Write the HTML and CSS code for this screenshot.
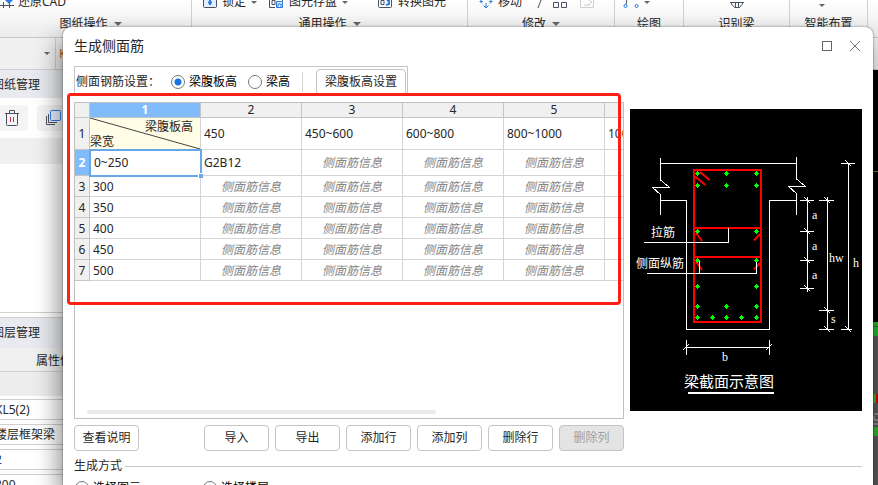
FILE: index.html
```html
<!DOCTYPE html>
<html lang="zh-CN">
<head>
    <meta charset="UTF-8">
    <meta name="viewport" content="width=device-width, initial-scale=1.0">
    <title>生成侧面筋</title>
    <link rel="stylesheet" href="styles.css">
</head>
<body>

<div class="ribbon">
    <div class="ribbon-group drawing">
        <div class="ribbon-tools first">
            <svg class="icon" width="16" height="16" viewBox="0 0 16 16"><path d="M0 4.500h13M3.500 8v6M9.500 8v6M0 11.500h14" fill="none" stroke="#4a5064"/><path d="M5 6l4 4 4-4-4-4z" fill="#2a7be4"/></svg>
            <span>还原CAD</span>
        </div>
        <div class="ribbon-label">图纸操作<i class="caret"></i></div>
    </div>
    <div class="ribbon-group">
        <div class="ribbon-tools">
            <svg class="icon" width="14" height="16" viewBox="0 0 14 16"><rect x=".5" y="2.500" width="13" height="11" rx="1" fill="#e3effd" stroke="#4a5064"/><path d="M7 6v5M5 8.500h4" stroke="#2a7be4" stroke-width="2"/></svg>
            <span>锁定</span><i class="caret small"></i>
            <svg class="icon far" width="16" height="16" viewBox="0 0 16 16"><path d="M7 13.500H1.500v-11h13V7M4 6.500h3v4H4z" fill="none" stroke="#4a5064"/><path d="M8.500 7.500h6v6h-6zM10 13v-3h3v3" fill="#e3effd" stroke="#2a7be4"/></svg>
            <span>图元存盘</span><i class="caret small"></i>
            <svg class="icon farther" width="16" height="16" viewBox="0 0 16 16"><rect x="1.500" y="2.500" width="13" height="11" rx="1" fill="none" stroke="#4a5064"/><path d="M4 6.500h3v4H4z" fill="none" stroke="#4a5064"/><path d="M9 11l3-1V5M10 7l2-2" fill="none" stroke="#2a7be4" stroke-width="2"/></svg>
            <span>转换图元</span>
        </div>
        <div class="ribbon-label">通用操作<i class="caret"></i></div>
    </div>
    <div class="ribbon-group">
        <div class="ribbon-tools">
            <svg class="icon" width="14" height="16" viewBox="0 0 14 16"><path d="M7 1v4M7 9v5M4.500 11.500L7 14l2.500-2.500M1 7.500h3M10 7.500h3M3 5.500l-2 2 2 2M11 5.500l2 2-2 2" fill="none" stroke="#2a7be4"/></svg>
            <span>移动</span>
            <svg class="icon far" width="14" height="16" viewBox="0 0 14 16"><path d="M5 14l5-13" stroke="#4a5064"/></svg>
            <svg class="icon" width="16" height="16" viewBox="0 0 16 16"><path d="M1.500 1.500h5v4h-5zM9.500 1.500h5v4h-5zM1.500 8.500h5v5h-5zM9.500 8.500h5v5h-5z" fill="none" stroke="#4a5064"/></svg>
            <svg class="icon far" width="16" height="16" viewBox="0 0 16 16"><path d="M1.500 2.500h13v11h-13zM5 11h6M9 5l4 3-4 3" fill="none" stroke="#cfcfcf"/></svg>
        </div>
        <div class="ribbon-label">修改<i class="caret"></i></div>
    </div>
    <div class="ribbon-group">
        <div class="ribbon-tools tight">
            <svg class="icon" width="16" height="16" viewBox="0 0 16 16"><path d="M3 11q0-6 3-9" fill="none" stroke="#4a5064"/><circle cx="2.500" cy="12" r="1.500" fill="none" stroke="#2a7be4"/><circle cx="13.500" cy="12" r="1.500" fill="none" stroke="#2a7be4"/></svg>
            <i class="caret small"></i>
        </div>
        <div class="ribbon-label">绘图</div>
    </div>
    <div class="ribbon-group">
        <div class="ribbon-tools middle">
            <svg class="icon" width="16" height="16" viewBox="0 0 16 16"><path d="M1 8.500h14M2.500 8v2l3 3.500h5l3-3.500V8M6.500 9v4M9.500 9v4" fill="none" stroke="#4a5064"/></svg>
        </div>
        <div class="ribbon-label">识别梁</div>
    </div>
    <div class="ribbon-group">
        <div class="ribbon-tools tight low"><i class="caret small"></i></div>
        <div class="ribbon-label">智能布置</div>
    </div>
    <div class="ribbon-group"></div>
</div>

<div class="combo-bar">
    <button class="combo" aria-label="楼层"><i class="caret small"></i></button>
    <span class="combo-next">K</span>
</div>

<div class="workspace">
    <div class="sidebar">
        <div class="side-title">图纸管理</div>
        <div class="side-tools">
            <button class="side-button" aria-label="删除">
                <svg width="16" height="18" viewBox="0 0 16 18"><path d="M1 4.500h14M5.500 4V1.500h5V4M2.500 5v10.500q0 1 1 1h9q1 0 1-1V5" fill="none" stroke="#4a5064"/><path d="M6.500 8v5M9.500 8v5" stroke="#c9303c"/></svg>
            </button>
            <button class="side-button" aria-label="复制">
                <svg width="16" height="16" viewBox="0 0 16 16"><path d="M1.500 6v8.500H10M3.500 4v8.500H12" fill="none" stroke="#4a5064"/><rect x="5.500" y=".5" width="10" height="10" rx="1" fill="#e9f2fd" stroke="#2a7be4"/></svg>
            </button>
        </div>
        <div class="side-head"></div>
        <div class="side-list"></div>
        <div class="side-title layers">图层管理</div>
        <div class="side-tab">属性值</div>
        <div class="side-gap"></div>
        <div class="side-row">KL5(2)</div>
        <div class="side-row">楼层框架梁</div>
        <div class="side-row blue">2</div>
        <div class="side-row">200</div>
    </div>
    <div class="canvas">
        <svg width="6" height="415" viewBox="0 0 6 415">
            <rect width="6" height="252" fill="#000"/>
            <rect y="101" width="6" height="1" fill="#77720a"/>
            <rect y="252" width="6" height="163" fill="#555758"/>
            <rect y="252" width="6" height="14" fill="#22b322"/>
            <rect y="256" width="6" height="1" fill="#117a11"/>
            <rect y="324" width="4" height="9" fill="#22b322"/>
            <rect x="4" y="324" width="2" height="9" fill="#c40000"/>
            <path d="M2 344h4M2 346v4h4M1 354h5" stroke="#b0b0b0" fill="none"/>
            <rect y="357" width="6" height="9" fill="#22b322"/>
        </svg>
    </div>
</div>

<div class="dialog" role="dialog" aria-labelledby="dialog-title">
    <div class="dialog-header">
        <h1 id="dialog-title">生成侧面筋</h1>
        <button class="window-button" aria-label="最大化">
            <svg width="12" height="12" viewBox="0 0 12 12"><rect x="1.500" y="1.500" width="9" height="9" fill="none" stroke="#666"/></svg>
        </button>
        <button class="window-button" aria-label="关闭">
            <svg width="12" height="12" viewBox="0 0 12 12"><path d="M1 1l10 10M11 1L1 11" stroke="#777"/></svg>
        </button>
    </div>

    <div class="dialog-body">
        <div class="left">
            <div class="settings">
                <span>侧面钢筋设置：</span>
                <label><input type="radio" name="height" checked>梁腹板高</label>
                <label><input type="radio" name="height">梁高</label>
                <span class="divider"></span>
                <button class="btn">梁腹板高设置</button>
            </div>

            <div class="grid-wrap">
                <div class="grid">
                    <table>
                        <colgroup>
                            <col class="col-index"><col class="col-width"><col><col><col><col><col>
                        </colgroup>
                        <thead>
                            <tr><th></th><th class="active">1</th><th>2</th><th>3</th><th>4</th><th>5</th><th>6</th></tr>
                        </thead>
                        <tbody>
                            <tr class="row-heights">
                                <th>1</th>
                                <td class="corner">
                                    <svg class="slash" viewBox="0 0 110 31" preserveAspectRatio="none"><path d="M0 0l110 31" stroke="#444"/></svg>
                                    <div class="corner-top">梁腹板高</div>
                                    <div>梁宽</div>
                                </td>
                                <td>450</td><td>450~600</td><td>600~800</td><td>800~1000</td><td>1000~1200</td>
                            </tr>
                            <tr class="row-current">
                                <th class="active">2</th><td class="selected">0~250</td><td>G2B12</td><td class="hint">侧面筋信息</td><td class="hint">侧面筋信息</td><td class="hint">侧面筋信息</td><td></td>
                            </tr>
                            <tr><th>3</th><td>300</td><td class="hint">侧面筋信息</td><td class="hint">侧面筋信息</td><td class="hint">侧面筋信息</td><td class="hint">侧面筋信息</td><td></td></tr>
                            <tr><th>4</th><td>350</td><td class="hint">侧面筋信息</td><td class="hint">侧面筋信息</td><td class="hint">侧面筋信息</td><td class="hint">侧面筋信息</td><td></td></tr>
                            <tr><th>5</th><td>400</td><td class="hint">侧面筋信息</td><td class="hint">侧面筋信息</td><td class="hint">侧面筋信息</td><td class="hint">侧面筋信息</td><td></td></tr>
                            <tr><th>6</th><td>450</td><td class="hint">侧面筋信息</td><td class="hint">侧面筋信息</td><td class="hint">侧面筋信息</td><td class="hint">侧面筋信息</td><td></td></tr>
                            <tr><th>7</th><td>500</td><td class="hint">侧面筋信息</td><td class="hint">侧面筋信息</td><td class="hint">侧面筋信息</td><td class="hint">侧面筋信息</td><td></td></tr>
                        </tbody>
                    </table>
                    <div class="scrollbar"></div>
                </div>
                <div class="mark"></div>
            </div>

            <div class="actions">
                <button class="btn help">查看说明</button>
                <button class="btn">导入</button>
                <button class="btn">导出</button>
                <button class="btn">添加行</button>
                <button class="btn">添加列</button>
                <button class="btn">删除行</button>
                <button class="btn" disabled>删除列</button>
            </div>
        </div>

        <svg class="diagram" width="232" height="302" viewBox="0 0 232 302">
            <defs><path id="dot" d="M0-2h1v1h1v1h1v1h-1v1h-1v1h-1v-1h-1v-1h-1v-1h1v-1h1z" fill="#00ff00"/></defs>
            <rect width="232" height="302" fill="#000"/>
            <!-- slab and beam outline -->
            <g fill="none" stroke="#fff" shape-rendering="crispEdges">
                <path d="M30.500 49v22l9 7.500h-17l8 7V106"/>
                <path d="M166.500 48v22l9 7.500h-17l8 7V106"/>
                <path d="M30 54.500h137M30 91.500h26.500v129h83v-129H167"/>
            </g>
            <!-- stirrup and ties -->
            <g fill="none" stroke="#f00" stroke-width="2">
                <path d="M64 61h67v152H64zM64 119h67M64 148h67"/>
                <path d="M70 63l9.500 8M65 67.500l10.500 8.500M66 124l6 8M130 125l-6 6.500M66 153l6 8M130 154l-6 6.500"/>
            </g>
            <use href="#dot" x="67" y="64"/><use href="#dot" x="96" y="64"/><use href="#dot" x="126" y="64"/>
            <use href="#dot" x="67" y="76"/><use href="#dot" x="96" y="76"/><use href="#dot" x="126" y="76"/>
            <use href="#dot" x="67" y="122"/><use href="#dot" x="126" y="122"/>
            <use href="#dot" x="67" y="151"/><use href="#dot" x="126" y="151"/>
            <use href="#dot" x="67" y="177"/><use href="#dot" x="126" y="177"/>
            <use href="#dot" x="67" y="197"/><use href="#dot" x="96" y="197"/><use href="#dot" x="126" y="197"/>
            <use href="#dot" x="67" y="208"/><use href="#dot" x="82" y="208"/><use href="#dot" x="96" y="208"/><use href="#dot" x="111" y="208"/><use href="#dot" x="126" y="208"/>
            <!-- leaders and dimensions -->
            <g fill="none" stroke="#fff" shape-rendering="crispEdges">
                <path d="M14 133.500h84.500V119M17 164.500h109.500V153M69.500 164.500V152"/>
                <path d="M177.500 88v95M170 91.500h14M170 122.500h14M170 151.500h14M170 179.500h14"/>
                <path d="M197.500 88v133M189 91.500h15M189 201.500h15M189 220.500h15"/>
                <path d="M218.500 54v167M211 54.500h14M211 220.500h11"/>
                <path d="M56.500 231v15M139.500 231v15M56 238.500h84"/>
                <path d="M174 88l6 6M174 119l6 6M174 148l6 6M174 176l6 6M194 88l6 6M194 198l6 6M194 217l6 6M215 51l6 6M215 217l6 6M53 241l6-6M136 241l6-6"/>
            </g>
            <path d="M58 284h86" stroke="#fff" stroke-width="2"/>
            <g class="cn">
                <text x="21" y="128">拉筋</text>
                <text x="6" y="159">侧面纵筋</text>
                <text class="caption" x="54" y="278">梁截面示意图</text>
            </g>
            <g class="dims">
                <text x="182" y="110">a</text>
                <text x="182" y="141">a</text>
                <text x="182" y="170">a</text>
                <text x="199" y="153">hw</text>
                <text x="223" y="158">h</text>
                <text x="201" y="214">s</text>
                <text x="92" y="252">b</text>
            </g>
        </svg>
    </div>

    <fieldset class="mode">
        <legend>生成方式</legend>
        <label><input type="radio" name="mode">选择图元</label>
        <label><input type="radio" name="mode">选择楼层</label>
    </fieldset>
</div>

</body>
</html>
```

FILE: styles.css
```css
* {
    box-sizing: border-box;
}
body {
    margin: 0;
    height: 100vh;
    position: relative;
    overflow: hidden;
    display: flex;
    flex-direction: column;
    font-family: "Noto Sans", "Noto Sans CJK SC", sans-serif;
    font-size: 12px;
    line-height: 16px;
    color: #262626;
    background: #fff;
}
button {
    font: inherit;
    color: inherit;
    padding: 0;
    border: none;
    background: none;
}
svg {
    display: block;
    flex: none;
}

/* ribbon */
.ribbon {
    display: grid;
    grid-template-columns: 192fr 276fr 147fr 69fr 106fr 78fr 10fr;
    height: 38px;
    flex: none;
    border-bottom: 1px solid #c9c9cd;
    background: linear-gradient(#fff, #ececec);
}
.ribbon-group {
    display: flex;
    flex-direction: column;
    justify-content: flex-end;
    gap: 6px;
    padding-bottom: 5px;
    border-right: 1px solid #d0d0d0;
    overflow: hidden;
    white-space: nowrap;
}
.ribbon-group.drawing {
    padding-right: 10px;
}
.ribbon-group:last-child {
    border: none;
}
.ribbon-tools {
    display: flex;
    align-items: center;
    gap: 5px;
    height: 16px;
    padding-left: 11px;
}
.ribbon-tools.first {
    padding-left: 0;
    gap: 2px;
}
.ribbon-tools.tight {
    padding-left: 8px;
}
.ribbon-tools.middle {
    padding-left: 0;
    justify-content: center;
}
.ribbon-tools.low {
    justify-content: center;
    align-items: flex-end;
    padding: 0 14px 3px 0;
}
.far {
    margin-left: 6px;
}
.farther {
    margin-left: 24px;
}
.ribbon-label {
    display: flex;
    align-items: center;
    justify-content: center;
    gap: 6px;
}
.caret {
    border: 4px solid transparent;
    border-top-color: #666;
    border-bottom: none;
}
.caret.small {
    border-width: 3px;
    border-bottom: none;
}

/* floor selector */
.combo-bar {
    display: flex;
    flex: none;
    height: 32px;
    border-bottom: 1px solid #d0d0d4;
    background: #f0f0f0;
}
.combo {
    display: flex;
    align-items: center;
    justify-content: flex-end;
    width: 56px;
    padding-right: 5px;
    border-right: 1px solid #cfcfd4;
}
.combo-next {
    padding: 8px 3px;
    color: #b5651d;
}

/* panels behind the dialog */
.workspace {
    display: flex;
    flex: 1;
    min-height: 0;
}
.sidebar {
    width: 180px;
    margin-left: -8px;
    overflow: hidden;
    background: #fff;
}
.side-title {
    height: 28px;
    padding-top: 7px;
    background: #e9eaef;
}
.side-title.layers {
    height: 31px;
    border-top: 1px solid #cfcfcf;
}
.side-tools {
    display: flex;
    gap: 9px;
    padding: 7px 4px;
}
.side-button {
    display: flex;
    align-items: center;
    justify-content: center;
    width: 32px;
    height: 26px;
    border-radius: 4px;
    background: #f4f4f4;
}
.side-head {
    height: 26px;
    background: #f0f0f0;
}
.side-list {
    height: 149px;
    margin-bottom: 4px;
    border-bottom: 1px solid #cfcfcf;
}
.side-tab {
    height: 24px;
    padding: 5px 44px 0;
    border-bottom: 1px solid #d0d0d0;
    background: #f0f0f0;
}
.side-gap {
    height: 24px;
    margin-bottom: 3px;
    background: #ededed;
}
.side-row {
    height: 21px;
    margin-bottom: 4px;
    padding: 2px 3px;
    border: 1px solid #cfcfcf;
    border-left: none;
}
.side-row.blue {
    color: #1f2f9c;
}
.canvas {
    display: flex;
    flex: 1;
    justify-content: flex-end;
    background: #555758;
}

/* dialog */
.dialog {
    position: absolute;
    top: 27px;
    left: 63px;
    right: 5px;
    bottom: 0;
    padding: 0 11px;
    overflow: hidden;
    border-radius: 8px 8px 0 0;
    background: #fff;
    box-shadow: 0 0 2px rgba(0, 0, 0, 0.6), -4px 12px 24px rgba(0, 0, 0, 0.45);
}
.dialog-header {
    display: flex;
    align-items: center;
    gap: 16px;
    height: 39px;
    padding: 0 1px 2px 0;
}
.dialog-header h1 {
    flex: 1;
    margin: 0;
    font-size: 14px;
    line-height: 20px;
    font-weight: normal;
}
.dialog-body {
    display: flex;
    align-items: flex-start;
    gap: 6px;
}
.left {
    flex: 1;
    min-width: 0;
}
.settings {
    display: flex;
    align-items: center;
    width: max-content;
    height: 30px;
    margin-bottom: 6px;
    padding: 0 1px;
    border: 1px solid #c4c4cc;
    border-bottom: none;
}
label {
    display: flex;
    align-items: center;
    gap: 4px;
    margin-left: 11px;
    color: #000;
}
input[type="radio"] {
    appearance: none;
    width: 14px;
    height: 14px;
    margin: 0;
    border: 1px solid #777;
    border-radius: 50%;
    background: #fff;
}
input[type="radio"]:checked {
    background: radial-gradient(circle, #1a73e0 3px, #fff 4px);
}
.divider {
    width: 1px;
    height: 20px;
    margin: 0 13px 0 12px;
    background: #d4d4d4;
}
.btn {
    height: 26px;
    border: 1px solid #c4c4c4;
    border-radius: 4px;
    background: #fff;
}
.btn:disabled {
    color: #a0a0a0;
    background: #e4e4e4;
}
.settings .btn {
    padding: 0 8px;
}

/* grid */
.grid-wrap {
    position: relative;
}
.grid {
    display: flex;
    flex-direction: column;
    justify-content: space-between;
    height: 317px;
    padding-bottom: 4px;
    overflow: hidden;
    border: 1px solid #c0c0c0;
}
table {
    width: 631px;
    table-layout: fixed;
    border-collapse: separate;
    border-spacing: 0;
}
.col-index {
    width: 15px;
}
.col-width {
    width: 111px;
}
th, td {
    height: 21px;
    padding: 1px 3px 0;
    border-right: 1px solid #d4d4d4;
    border-bottom: 1px solid #d4d4d4;
    text-align: left;
}
th {
    padding: 1px 0 0;
    font-weight: normal;
    text-align: center;
    background: #f0f0f0;
    border-color: #c4c4c4;
}
thead th {
    height: 15px;
    padding: 0;
    line-height: 14px;
}
th.active {
    color: #fff;
    font-weight: bold;
    background: #80bbfb;
}
.row-heights td {
    height: 32px;
}
.row-current td {
    height: 26px;
}
.hint {
    color: #858585;
    font-style: italic;
    text-align: center;
}
td.corner {
    position: relative;
    padding: 0;
    line-height: 15px;
    background: #fffde6;
}
.corner-top {
    padding-right: 7px;
    text-align: right;
}
.slash {
    position: absolute;
    top: 0;
    left: 0;
    width: 100%;
    height: 100%;
}
td.selected {
    position: relative;
    padding-left: 4px;
    outline: 2px solid #6aa7e6;
    outline-offset: -1px;
}
td.selected::after {
    content: "";
    position: absolute;
    right: -3px;
    bottom: -3px;
    width: 4px;
    height: 4px;
    border: 1px solid #fff;
    box-sizing: content-box;
    border-width: 1px 0 0 1px;
    background: #6aa7e6;
}
.scrollbar {
    width: 349px;
    max-width: 64%;
    height: 4px;
    margin-left: 12px;
    border-radius: 2px;
    background: #ebebeb;
}
.mark {
    position: absolute;
    top: -9px;
    left: -7px;
    right: 3px;
    height: 212px;
    border: 3px solid #ff2015;
    border-radius: 4px;
}
.actions {
    display: flex;
    gap: 6px;
    margin-top: 6px;
}
.actions .btn {
    width: 65px;
}
.actions .help {
    margin-right: auto;
}

/* beam section */
.diagram {
    margin-top: 43px;
}
.cn {
    font-family: "Noto Sans CJK SC", sans-serif;
    font-size: 12px;
    fill: #fff;
}
.caption {
    font-size: 15px;
}
.dims {
    font-family: "Liberation Serif", serif;
    font-size: 12px;
    fill: #fff;
}

.mode {
    display: flex;
    gap: 61px;
    margin: 7px 0 0;
    padding: 6px 0;
    border: none;
    border-top: 1px solid #c8c8c8;
}
.mode legend {
    padding: 0 3px 0 0;
}
.mode label {
    margin-left: 1px;
}
```
